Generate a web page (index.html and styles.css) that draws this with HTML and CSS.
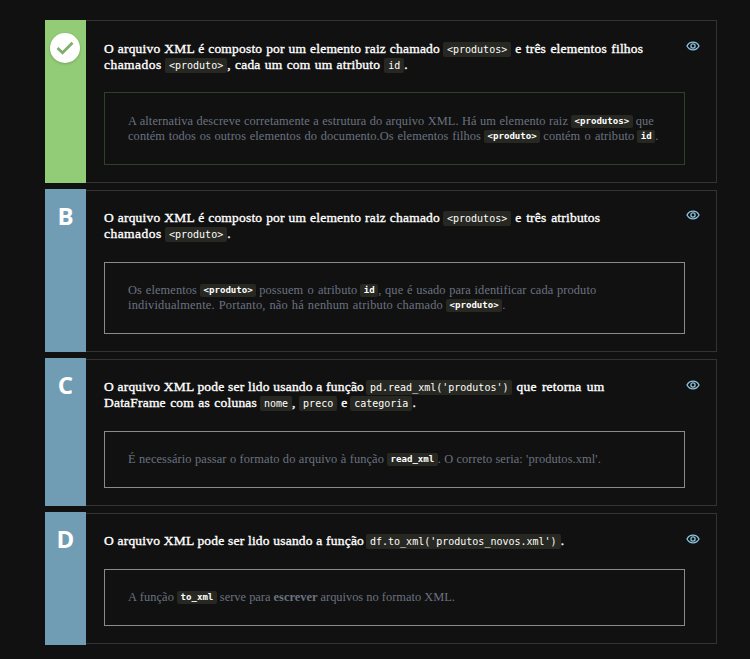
FILE: index.html
```html
<!DOCTYPE html>
<html lang="pt-BR">
<head>
<meta charset="utf-8">
<title>Alternativas</title>
<link rel="stylesheet" href="styles.css">
</head>
<body>
<svg class="defs" width="0" height="0" aria-hidden="true">
<symbol id="eye" viewBox="0 0 14 10"><path d="M1 5C3.6-.1 10.4-.1 13 5C10.4 10.1 3.6 10.1 1 5Z"/><circle cx="7" cy="5" r="2.1"/></symbol>
</svg>
<main class="list">
<section class="option correct">
<div class="mark"><span class="check"><svg width="18" height="14" viewBox="0 0 18 14"><path d="M1.5 7L6.5 11.7L16.5 1.7"/></svg></span></div>
<div class="body">
<h2 class="title"><span class="line"><span class="t a">O arquivo XML é composto por um elemento raiz chamado</span><code>&lt;produtos&gt;</code><span class="t b">e três elementos filhos</span></span><span class="line"><span class="t c">chamados</span><code>&lt;produto&gt;</code><span class="t d">, cada um com um atributo</span><code>id</code><span class="t">.</span></span></h2>
<svg class="eye" width="14" height="10"><use href="#eye"/></svg>
<div class="note"><span class="line"><span class="t e">A alternativa descreve corretamente a estrutura do arquivo XML. Há um elemento raiz</span><code>&lt;produtos&gt;</code><span class="t f">que</span></span><span class="line"><span class="t g">contém todos os outros elementos do documento.Os elementos filhos</span><code>&lt;produto&gt;</code><span class="t h">contém o atributo</span><code>id</code><span class="t">.</span></span></div>
</div>
</section>
<section class="option">
<div class="mark">B</div>
<div class="body">
<h2 class="title"><span class="line"><span class="t a">O arquivo XML é composto por um elemento raiz chamado</span><code>&lt;produtos&gt;</code><span class="t b b2">e três atributos</span></span><span class="line"><span class="t c">chamados</span><code>&lt;produto&gt;</code><span class="t">.</span></span></h2>
<svg class="eye" width="14" height="10"><use href="#eye"/></svg>
<div class="note"><span class="line"><span class="t i">Os elementos</span><code>&lt;produto&gt;</code><span class="t j">possuem o atributo</span><code>id</code><span class="t k">, que é usado para identificar cada produto</span></span><span class="line"><span class="t l">individualmente. Portanto, não há nenhum atributo chamado</span><code>&lt;produto&gt;</code><span class="t">.</span></span></div>
</div>
</section>
<section class="option low">
<div class="mark">C</div>
<div class="body">
<h2 class="title"><span class="line"><span class="t m">O arquivo XML pode ser lido usando a função</span><code>pd.read_xml('produtos')</code><span class="t b b3">que retorna um</span></span><span class="line"><span class="t n">DataFrame com as colunas</span><code>nome</code><span class="t o">,</span><code>preco</code><span class="t p">e</span><code>categoria</code><span class="t">.</span></span></h2>
<svg class="eye" width="14" height="10"><use href="#eye"/></svg>
<div class="note"><span class="line"><span class="t q">É necessário passar o formato do arquivo à função</span><code>read_xml</code><span class="t u">. O correto seria: 'produtos.xml'.</span></span></div>
</div>
</section>
<section class="option low">
<div class="mark">D</div>
<div class="body">
<h2 class="title"><span class="line"><span class="t m">O arquivo XML pode ser lido usando a função</span><code>df.to_xml('produtos_novos.xml')</code><span class="t">.</span></span></h2>
<svg class="eye" width="14" height="10"><use href="#eye"/></svg>
<div class="note"><span class="line"><span class="t r">A função</span><code>to_xml</code><span class="t s">serve para <b>escrever</b> arquivos no formato XML.</span></span></div>
</div>
</section>
</main>
</body>
</html>
```
FILE: styles.css
```css
* { box-sizing: border-box; }
body { margin: 0; background: #111; color: #fff; font-family: "Source Serif Pro", "Liberation Serif", serif; }
.defs { display: block; }
.list { width: 672px; margin: 20px 0 0 45px; display: flex; flex-direction: column; gap: 6px; }
.option { display: grid; grid-template-columns: 41px 1fr; }
.mark { background: #719db4; color: #fff; font: 700 24px/26px "Open Sans", sans-serif; text-align: center; padding-top: 14px; }
.correct .mark { background: #93cc76; padding: 13px 0 0 5px; }
.check { display: flex; align-items: center; justify-content: center; width: 30px; height: 30px; border-radius: 50%; background: #fff; box-shadow: 0 1px 3px #0003; }
.check path { fill: none; stroke: #82ae6d; stroke-width: 2.8; }
.body { margin-top: 1px; border: 1px solid #333; border-left: 0; padding: 18px 15px 17px 18px; display: grid; grid-template-columns: 581px 1fr; }
.correct .body { margin-top: 0; padding-top: 19px; }
.option:last-child .body { margin-bottom: 1px; }
.title { margin: 0 0 20px; padding-top: 1px; font-size: 13.5px; font-weight: 400; line-height: 16px; -webkit-text-stroke: .35px #fff; letter-spacing: .2px; }
.correct .title { margin-bottom: 19px; }
.line { display: flex; white-space: nowrap; }
.t { flex: none; text-align-last: justify; margin-right: 3px; }
.t:last-child { margin-right: 0; }
.eye { display: block; margin: 1px 0 0 1px; fill: none; stroke: #8cc4e0; stroke-width: 1.3; }
.low .eye { margin-top: 2px; }
.note { grid-column: 1; width: 581px; border: 1px solid #8a8a8a; padding: 20px 23px; color: #6b7280; font-size: 12.4px; line-height: 15px; letter-spacing: .1px; min-height: 57px; }
.correct .note { border-color: #2d4227; padding: 21px 23px 20px; }
code { flex: none; height: 15px; margin-top: 1px; padding: 0 4px; border-radius: 2px; background: #272822; color: #fff; font: 400 10px/15px "DejaVu Sans Mono", monospace; letter-spacing: 0; -webkit-text-stroke: 0; }
.note code { height: 13px; font: 700 9.1px/13px "DejaVu Sans Mono", monospace; padding: 0 3.5px; }
.a { width: 336px; }
.b { width: 128px; margin-left: 4px; }
.b2 { width: 85px; }
.b3 { width: 88px; }
.c { width: 58px; letter-spacing: .45px; }
.d { width: 153px; margin-right: 4px; }
.e { width: 440px; }
.f, .h, .j, .s { margin-left: 3px; }
.g { width: 353px; }
.h { width: 91px; }
.i { width: 69px; }
.j { width: 98px; }
.k { width: 218px; }
.l { width: 315px; letter-spacing: .2px; }
.m { width: 259px; }
.n { width: 153px; }
.o { width: 4px; }
.p { width: 6px; margin-left: 4px; }
.q { width: 256px; }
.r { width: 46px; }
.u { width: 163px; }
.s { width: 235px; letter-spacing: 0; }
```
